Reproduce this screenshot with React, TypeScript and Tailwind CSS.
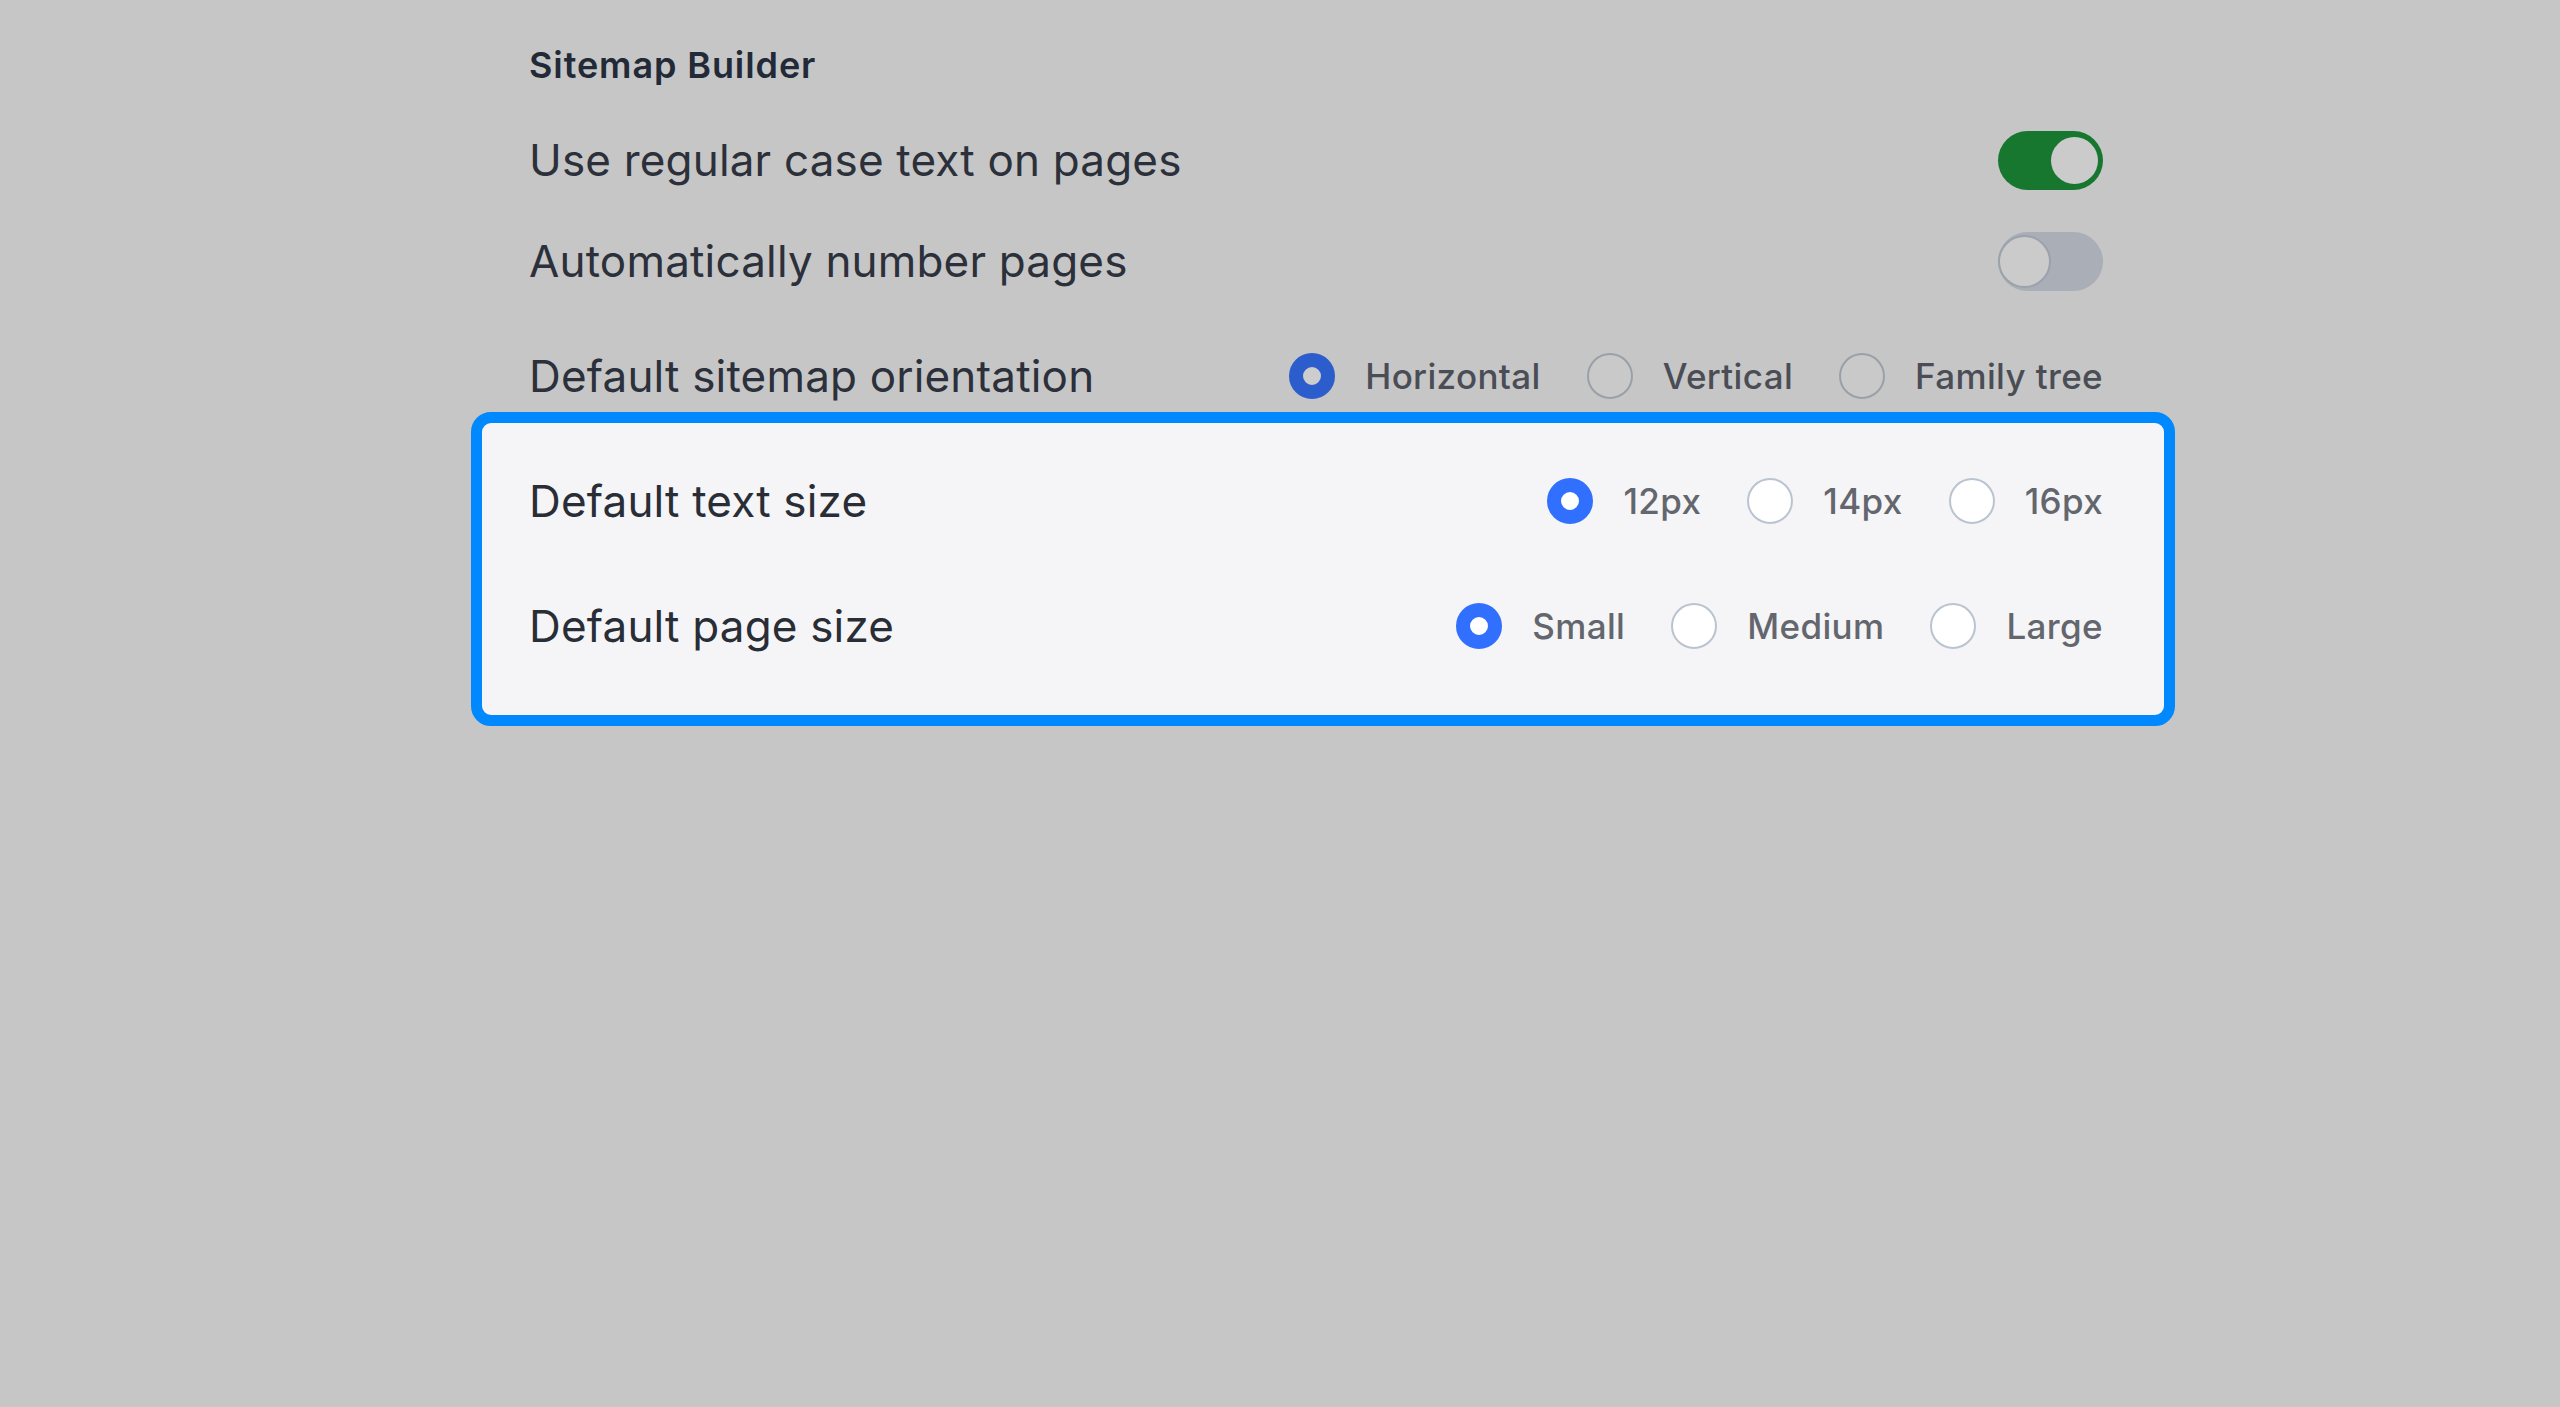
import React, { useState } from 'react';

type Option = { value: string; label: string };

// Round radio, filled style when picked
const Radio = ({ checked, dim }: { checked: boolean; dim: boolean }) => {
  if (checked) {
    return (
      <span
        className={`box-border inline-block h-[46px] w-[46px] shrink-0 rounded-full border-[14px] ${
          dim ? 'border-[#2b5dcd] bg-[#cdcdcd]' : 'border-[#3170ff] bg-white'
        }`}
      />
    );
  }
  return (
    <span
      className={`box-border inline-block h-[46px] w-[46px] shrink-0 rounded-full border-2 ${
        dim ? 'border-[#9aa0a9] bg-[#c9c9c9]' : 'border-[#bac4d0] bg-white'
      }`}
    />
  );
};

const RadioGroup = ({
  options,
  value,
  onChange,
  dim,
}: {
  options: Option[];
  value: string;
  onChange: (v: string) => void;
  dim: boolean;
}) => (
  <div className="flex items-center gap-[46px]">
    {options.map((o) => (
      <button
        key={o.value}
        type="button"
        onClick={() => onChange(o.value)}
        className="flex items-center gap-[30px]"
      >
        <Radio checked={o.value === value} dim={dim} />
        <span
          className={`text-[35px] font-medium leading-[46px] tracking-[0.01em] ${
            dim ? 'text-[#4a4d55]' : 'text-[#63666d]'
          }`}
        >
          {o.label}
        </span>
      </button>
    ))}
  </div>
);

const Toggle = ({ on, onClick }: { on: boolean; onClick: () => void }) => (
  <button
    type="button"
    onClick={onClick}
    className={`flex h-[59px] w-[105px] items-center rounded-full ${
      on ? 'justify-end bg-[#17772f] px-[5px]' : 'justify-start bg-[#a9aeb7] px-[2px]'
    }`}
  >
    <span
      className={`block rounded-full bg-[#cbcbcb] ${
        on ? 'h-[47px] w-[47px]' : 'h-[49px] w-[49px] shadow-[0_0_0_2px_rgba(150,156,166,0.7)]'
      }`}
    />
  </button>
);

const Label = ({ children }: { children: React.ReactNode }) => (
  <span className="text-[44px] leading-[60px] tracking-[0.004em] text-[#2b303a]">{children}</span>
);

export default function App() {
  const [regularCase, setRegularCase] = useState(true);
  const [autoNumber, setAutoNumber] = useState(false);
  const [orientation, setOrientation] = useState('horizontal');
  const [textSize, setTextSize] = useState('12');
  const [pageSize, setPageSize] = useState('small');

  return (
    <div className="min-h-screen w-full bg-[#c6c6c6] pl-[529px] pt-[45px] font-['Inter','Noto_Sans',sans-serif]">
      <div className="w-[1574px]">
        <h2 className="text-[36px] font-semibold leading-[40px] tracking-[0.025em] text-[#232a37]">Sitemap Builder</h2>

        <div className="mt-[45px] flex h-[60px] items-center justify-between">
          <Label>Use regular case text on pages</Label>
          <Toggle on={regularCase} onClick={() => setRegularCase(!regularCase)} />
        </div>

        <div className="mt-[41px] flex h-[60px] items-center justify-between">
          <Label>Automatically number pages</Label>
          <Toggle on={autoNumber} onClick={() => setAutoNumber(!autoNumber)} />
        </div>

        <div className="mt-[55px] flex h-[60px] items-center justify-between">
          <Label>Default sitemap orientation</Label>
          <RadioGroup
            dim
            value={orientation}
            onChange={setOrientation}
            options={[
              { value: 'horizontal', label: 'Horizontal' },
              { value: 'vertical', label: 'Vertical' },
              { value: 'family', label: 'Family tree' },
            ]}
          />
        </div>

        {/* highlighted section */}
        <div className="-ml-[58px] -mr-[72px] mt-[6px] rounded-[20px] border-[11px] border-[#0088ff] bg-[#f5f5f7] pb-[59px] pl-[47px] pr-[61px] pt-[48px]">
          <div className="flex h-[60px] items-center justify-between">
            <span className="text-[44px] leading-[60px] tracking-[0.004em] text-[#292d36]">Default text size</span>
            <RadioGroup
              dim={false}
              value={textSize}
              onChange={setTextSize}
              options={[
                { value: '12', label: '12px' },
                { value: '14', label: '14px' },
                { value: '16', label: '16px' },
              ]}
            />
          </div>
          <div className="mt-[65px] flex h-[60px] items-center justify-between">
            <span className="text-[44px] leading-[60px] tracking-[0.004em] text-[#292d36]">Default page size</span>
            <RadioGroup
              dim={false}
              value={pageSize}
              onChange={setPageSize}
              options={[
                { value: 'small', label: 'Small' },
                { value: 'medium', label: 'Medium' },
                { value: 'large', label: 'Large' },
              ]}
            />
          </div>
        </div>
      </div>
    </div>
  );
}
